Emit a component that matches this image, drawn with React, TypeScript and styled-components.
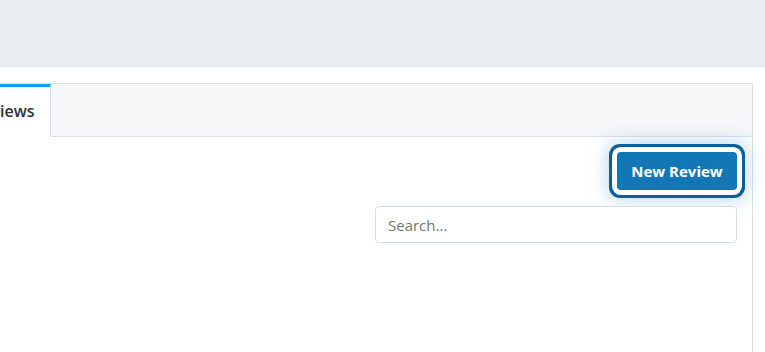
import React from "react";
import styled, { createGlobalStyle } from "styled-components";

const GlobalStyle = createGlobalStyle`
  html, body {
    margin: 0;
    padding: 0;
    background: #ffffff;
    font-family: "Open Sans", Inter, sans-serif;
    overflow: hidden;
  }
`;

function App() {
  return (
    <>
      <GlobalStyle />
      <$TopBar />
      <$Main>
        <$Card>
          <$Tabs>
            <$Tab active>Reviews</$Tab>
          </$Tabs>
          <$Body>
            <$Toolbar>
              <$PrimaryButton>New Review</$PrimaryButton>
            </$Toolbar>
            <$SearchRow>
              <$Search type="text" placeholder="Search..." />
            </$SearchRow>
          </$Body>
        </$Card>
      </$Main>
    </>
  );
}

const $TopBar = styled.header`
  height: 66px;
  background: #e9ecf1;
  border-bottom: 1px solid #dde2e8;
`;

const $Main = styled.main`
  padding: 16px 12px 0 0;
`;

const $Card = styled.section`
  margin-left: -44px;
  height: 280px;
  border: 1px solid #d8e1ea;
  border-bottom: none;
  background: #ffffff;
`;

const $Tabs = styled.nav`
  display: flex;
  height: 52px;
  background: #f5f7f9;
  border-bottom: 1px solid #d8e1ea;
`;

const $Tab = styled.div<{ active?: boolean }>`
  display: flex;
  align-items: center;
  padding: 0 15px 2px 15px;
  background: ${props => (props.active ? "#ffffff" : "transparent")};
  border-top: 3px solid ${props => (props.active ? "#0ea5f0" : "transparent")};
  border-right: 1px solid #d8e1ea;
  margin-bottom: -1px;
  font-size: 16px;
  font-weight: 600;
  color: #2b2f36;
`;

const $Body = styled.div`
  padding: 15px 15px 0 0;
  display: flex;
  flex-direction: column;
  gap: 16px;
`;

const $Toolbar = styled.div`
  display: flex;
  justify-content: flex-end;
`;

const $PrimaryButton = styled.button`
  width: 120px;
  height: 38px;
  border: none;
  border-radius: 4px;
  background: #1477b5;
  color: #ffffff;
  font-family: "Open Sans", sans-serif;
  font-size: 15px;
  font-weight: 700;
  cursor: pointer;
  box-shadow: 0 0 0 5px #ffffff, 0 0 0 8px #0b5e9c, 0 0 18px 10px rgba(20, 119, 181, 0.28);
`;

const $SearchRow = styled.div`
  display: flex;
  justify-content: flex-end;
`;

const $Search = styled.input`
  box-sizing: border-box;
  width: 362px;
  height: 37px;
  padding: 0 12px;
  border: 1px solid #d5dde5;
  border-radius: 4px;
  font-family: "Open Sans", sans-serif;
  font-size: 15px;
  color: #2b2f36;

  ::placeholder {
    color: #8a98a8;
  }

  :focus {
    outline: none;
  }
`;

export default App;
